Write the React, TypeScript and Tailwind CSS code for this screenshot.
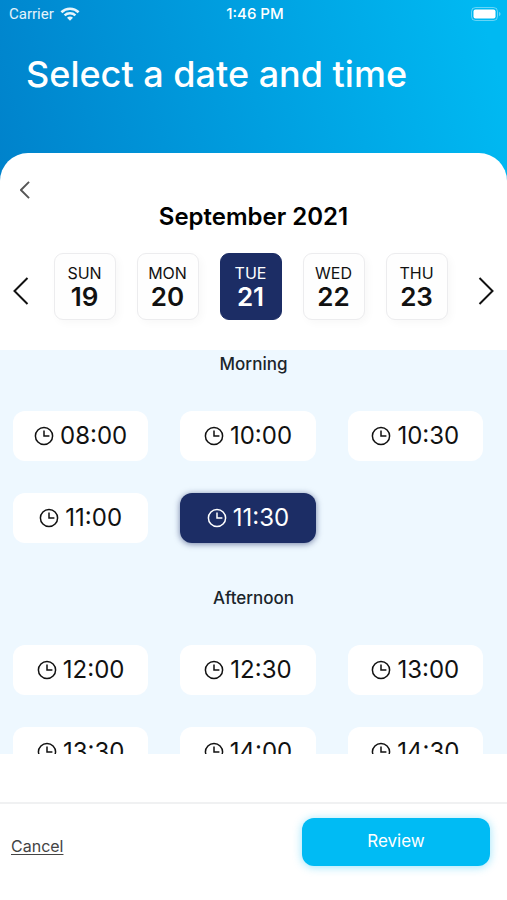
import clsx from "clsx"

const DAYS = [
  { name: "SUN", date: 19 },
  { name: "MON", date: 20 },
  { name: "TUE", date: 21 },
  { name: "WED", date: 22 },
  { name: "THU", date: 23 },
]

const SLOTS = [
  { title: "Morning", times: ["08:00", "10:00", "10:30", "11:00", "11:30"] },
  { title: "Afternoon", times: ["12:00", "12:30", "13:00", "13:30", "14:00", "14:30"] },
]

const SELECTED_DATE = 21
const SELECTED_TIME = "11:30"

function Chevron({ className, right }: { className: string; right?: boolean }) {
  return (
    <svg viewBox="0 0 16 28" fill="none" stroke="currentColor" className={className} aria-hidden="true">
      <path d={right ? "M1.5 1L14.5 14L1.5 27" : "M14.5 1L1.5 14L14.5 27"} />
    </svg>
  )
}

function ClockIcon() {
  return (
    <svg viewBox="0 0 20 20" fill="none" stroke="currentColor" className="size-5" aria-hidden="true">
      <circle cx="10" cy="10" r="8.6" strokeWidth="1.5" />
      <path d="M10 4.6V10H15.4" strokeWidth="1.5" />
    </svg>
  )
}

function WifiIcon() {
  return (
    <svg viewBox="0 0 20 14" className="h-3.5 w-5" fill="none" stroke="currentColor" aria-hidden="true">
      <path d="M1.4 5.2C6.2 0.6 13.8 0.6 18.6 5.2" strokeWidth="2.6" />
      <path d="M4.6 8.4C7.6 5.6 12.4 5.6 15.4 8.4" strokeWidth="2.5" />
      <path d="M7 10.7C8.7 9.2 11.3 9.2 13 10.7L10 13.7Z" fill="currentColor" stroke="none" />
    </svg>
  )
}

function BatteryIcon() {
  return (
    <svg viewBox="0 0 30 14" className="h-3.5 w-[30px]" fill="none" aria-hidden="true">
      <rect x="0.5" y="0.5" width="26" height="13" rx="4" stroke="white" strokeOpacity="0.4" />
      <rect x="2.5" y="2.5" width="22" height="9" rx="2" fill="white" />
      <path d="M28 5C30 5.5 30 8.5 28 9Z" fill="white" fillOpacity="0.4" />
    </svg>
  )
}

function StatusBar() {
  return (
    <div className="grid h-7 grid-cols-3 items-center pr-[6px] pl-[9px] text-[15px]">
      <div className="flex items-center gap-1.5 font-['Roboto',sans-serif] text-white/90">
        Carrier <WifiIcon />
      </div>
      <span className="text-center font-medium">1:46 PM</span>
      <div className="flex justify-end">
        <BatteryIcon />
      </div>
    </div>
  )
}

export default function App() {
  return (
    <div className="flex h-screen flex-col bg-white font-['Inter',sans-serif] text-[#111]">
      <header className="bg-[linear-gradient(75deg,#0082cb_0%,#009fe0_50%,#00b9f2_95%)] text-white">
        <StatusBar />
        <h1 className="px-[26px] pt-6 pb-[57px] text-4xl leading-11 font-medium">Select a date and time</h1>
        <div className="h-7 rounded-t-[28px] bg-white" />
      </header>

      <section className="pb-[30px]">
        <button type="button" aria-label="Back" className="ml-5 block text-[#555]">
          <Chevron className="h-[18px] w-2.5 stroke-3" />
        </button>
        <h2 className="text-center text-2xl leading-9 font-semibold text-black">September 2021</h2>
        <div className="mt-[18px] flex items-center justify-between px-[13px]">
          <button type="button" aria-label="Previous days" className="pt-2">
            <Chevron className="h-7 w-4 stroke-2" />
          </button>
          <div className="flex gap-[21px]">
            {DAYS.map((day) => (
              <button
                key={day.date}
                type="button"
                className={clsx(
                  "flex h-[67px] w-[62px] flex-col items-center justify-center rounded-[9px] border",
                  day.date === SELECTED_DATE
                    ? "border-[#1c2d65] bg-[#1c2d65] text-white"
                    : "border-[#ececee] bg-[#fefefe] shadow-[3px_3px_8px_rgba(0,0,0,0.03)]"
                )}
              >
                <span className="text-base leading-5">{day.name}</span>
                <span className="text-[26px] leading-7 font-semibold">{day.date}</span>
              </button>
            ))}
          </div>
          <button type="button" aria-label="Next days" className="pt-2 pl-1.5">
            <Chevron right className="h-7 w-4 stroke-2" />
          </button>
        </div>
      </section>

      <main className="mb-12 min-h-0 flex-1 overflow-y-auto bg-[#eef8ff] [scrollbar-width:none]">
        {SLOTS.map((slot) => (
          <section key={slot.title} className="pb-[41px]">
            <h3 className="text-center text-[17px] leading-7 font-medium text-[#1b252b]">{slot.title}</h3>
            <div className="mt-[33px] grid grid-cols-3 gap-8 pr-6 pl-[13px]">
              {slot.times.map((time) => (
                <button
                  key={time}
                  type="button"
                  className={clsx(
                    "flex h-[50px] items-center justify-center gap-1.5 rounded-xl text-2xl",
                    time === SELECTED_TIME
                      ? "bg-[#1c2d65] text-white shadow-[0_1px_6px_rgba(28,45,101,0.6)]"
                      : "bg-white"
                  )}
                >
                  <ClockIcon />
                  {time}
                </button>
              ))}
            </div>
          </section>
        ))}
      </main>

      <footer className="flex h-[98px] items-start justify-between border-t-2 border-[#f0f1f2] pt-3.5 pr-[17px] pl-[11px]">
        <a href="#" className="mt-4 text-base leading-6 text-[#444] underline underline-offset-2">
          Cancel
        </a>
        <button
          type="button"
          className="h-12 w-[188px] rounded-xl bg-[#00bbf4] text-[17px] text-white shadow-[0_1px_10px_rgba(0,187,244,0.4)]"
        >
          Review
        </button>
      </footer>
    </div>
  )
}
